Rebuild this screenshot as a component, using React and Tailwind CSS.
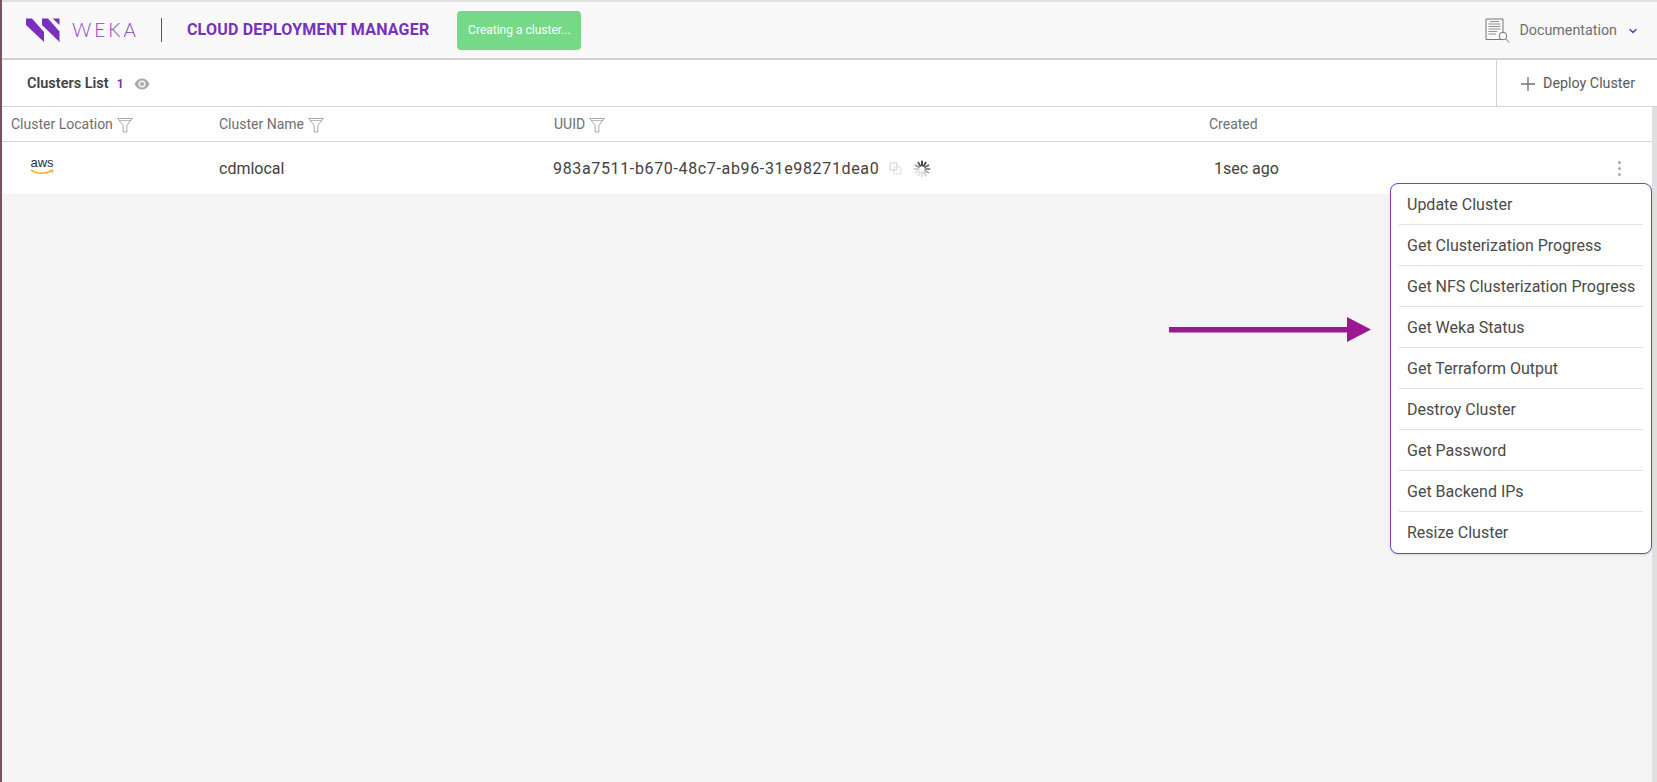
import React from 'react';
import { ChevronDown } from 'lucide-react';

const menuItems = [
  'Update Cluster',
  'Get Clusterization Progress',
  'Get NFS Clusterization Progress',
  'Get Weka Status',
  'Get Terraform Output',
  'Destroy Cluster',
  'Get Password',
  'Get Backend IPs',
  'Resize Cluster',
];

function WekaMark() {
  return (
    <svg width="34" height="24" viewBox="0 0 34 24" fill="#7b2fbe">
      <path d="M0 0.500H6L18 14V24L0 7Z" />
      <path d="M16 0.500H22L33.500 13.500V24L16 7Z" />
      <path d="M26.600 0.500H33.500V7Z" />
    </svg>
  );
}

function FunnelIcon() {
  return (
    <svg width="16" height="16" viewBox="0 0 16 16" fill="none" stroke="#a8a8a8" strokeWidth="1">
      <path d="M0.700 1.500H15.300L9.800 8.500V15H6.200V8.500Z" strokeLinejoin="round" />
      <path d="M2 3.500H14" strokeWidth="0.800" />
    </svg>
  );
}

function EyeIcon() {
  return (
    <svg width="16" height="12" viewBox="0 0 15 12">
      <path d="M0 6C2 2 4.500 0.500 7.500 0.500C10.500 0.500 13 2 15 6C13 10 10.500 11.500 7.500 11.500C4.500 11.500 2 10 0 6Z" fill="#a8a8a8" />
      <circle cx="7.500" cy="6" r="3.600" fill="#f4f4f4" />
      <circle cx="7.500" cy="6" r="2" fill="#a8a8a8" />
    </svg>
  );
}

function DocIcon() {
  return (
    <svg width="25" height="25" viewBox="0 0 25 25" fill="none" stroke="#777" strokeWidth="1">
      <path d="M1 1H18V21.500H1Z" fill="#f9f9f9" />
      <path d="M5 3.500H14M3.500 6H15.500M3.500 8.500H15.500M3.500 11H15.500M3.500 13.500H12M3.500 16H11" strokeWidth="0.800" />
      <circle cx="18" cy="18" r="3.800" fill="#f9f9f9" />
      <path d="M21 21L24 24.500" />
    </svg>
  );
}

function CopyIcon() {
  return (
    <svg width="13" height="13" viewBox="0 0 13 13" fill="none" stroke="#cfcfcf" strokeWidth="1">
      <path d="M1 1H8V8H1Z" />
      <path d="M5 5H12V12H5Z" strokeDasharray="1.500 1" />
    </svg>
  );
}

function Spinner() {
  const shades = ['#333', '#444', '#666', '#888', '#aaa', '#ccc', '#ddd', '#e4e4e4', '#e4e4e4', '#d0d0d0', '#999', '#555'];
  return (
    <svg width="18" height="18" viewBox="0 0 18 18" strokeWidth="1.800" strokeLinecap="round">
      {shades.map((c, i) => (
        <line key={i} x1="9" y1="1.500" x2="9" y2="5.500" stroke={c} transform={`rotate(${i * 30} 9 9)`} />
      ))}
    </svg>
  );
}

function AwsLogo() {
  return (
    <div className="flex w-[24px] flex-col items-center">
      <span className="text-[13px] leading-[12px] text-[#232f3e] font-['Liberation_Sans',sans-serif]">aws</span>
      <svg width="24" height="6" viewBox="0 0 24 6" fill="none" stroke="#f90" strokeWidth="1.300">
        <path d="M1 1C6 5 16 5 21 2" />
        <path d="M19.500 1.300L23 1.200L21.800 4" strokeWidth="1" />
      </svg>
    </div>
  );
}

function HeaderCell({ label, filter, className }) {
  return (
    <div className={`flex items-center gap-[4px] pt-[1px] text-[14px] text-[#6f6f6f] ${className}`}>
      <span>{label}</span>
      {filter && <FunnelIcon />}
    </div>
  );
}

export default function App() {
  return (
    <div className="relative flex h-[782px] w-full overflow-hidden bg-[#f5f5f5] font-['Roboto',sans-serif]">
      <div className="w-[2px] shrink-0 bg-[#7d4f60]" />
      <div className="flex min-w-0 flex-1 flex-col">
        <div className="h-[2px] bg-[#e0e0e0]" />

        <header className="flex h-[56px] items-center justify-between bg-[#f9f9f9] pl-[24px] pr-[18px]">
          <div className="flex items-center">
            <WekaMark />
            <span className="ml-[12px] text-[19px] font-light tracking-[3px] text-[#8a45c8] font-['Lato',sans-serif]">WEKA</span>
            <div className="ml-[22px] h-[24px] w-px bg-[#7b2fbe]" />
            <span className="ml-[25px] text-[16px] font-bold tracking-[0.2px] text-[#7b2fbe]">CLOUD DEPLOYMENT MANAGER</span>
            <div className="ml-[28px] flex h-[39px] w-[124px] items-center justify-center rounded-[4px] bg-[#76d987] text-[12px] text-white">
              Creating a cluster...
            </div>
          </div>
          <div className="flex items-center">
            <DocIcon />
            <span className="ml-[9px] pt-[2px] text-[14.300px] text-[#6f6f6f]">Documentation</span>
            <ChevronDown size={12} strokeWidth={3} className="ml-[10px] mt-[2px] text-[#7b2fbe]" />
          </div>
        </header>
        <div className="h-[2px] bg-[#d0d0d0]" />

        <div className="flex h-[47px] items-center justify-between border-b border-[#d4d4d4] bg-white">
          <div className="flex items-center pl-[25px] pt-[1px]">
            <span className="text-[14.500px] font-semibold text-[#424242]">Clusters List</span>
            <span className="ml-[8px] text-[12px] font-bold text-[#7b2fbe]">1</span>
            <span className="ml-[10px]"><EyeIcon /></span>
          </div>
          <div className="flex h-full w-[161px] items-center gap-[8px] border-l border-[#d4d4d4] pl-[24px] pt-[1px]">
            <svg width="14" height="14" viewBox="0 0 14 14" stroke="#6f6f6f" strokeWidth="1.300">
              <path d="M7 0V14M0 7H14" />
            </svg>
            <span className="text-[14.300px] text-[#5a5a5a]">Deploy Cluster</span>
          </div>
        </div>

        <div className="flex flex-1">
          <div className="min-w-0 flex-1">
            <div className="flex h-[35px] items-center border-b border-[#d4d4d4] bg-white">
              <HeaderCell label="Cluster Location" filter className="w-[216px] pl-[9px]" />
              <HeaderCell label="Cluster Name" filter className="w-[336px] pl-[1px]" />
              <HeaderCell label="UUID" filter className="w-[655px]" />
              <HeaderCell label="Created" />
            </div>
            <div className="flex h-[52px] items-center bg-white">
              <div className="w-[215px] pb-[4px] pl-[28px]">
                <AwsLogo />
              </div>
              <div className="w-[336px] pl-[2px] pt-[1px] text-[16px] text-[#424242]">cdmlocal</div>
              <div className="flex w-[661px] items-center pt-[1px] text-[16px] tracking-[0.650px] text-[#424242]">
                <span>983a7511-b670-48c7-ab96-31e98271dea0</span>
                <span className="ml-[10px]"><CopyIcon /></span>
                <span className="ml-[11px]"><Spinner /></span>
              </div>
              <div className="flex-1 pt-[1px] text-[16px] text-[#424242]">1sec ago</div>
              <div className="mr-[31px] flex flex-col gap-[3px]">
                <div className="h-[3px] w-[3px] rounded-full bg-[#a8a8a8]" />
                <div className="h-[3px] w-[3px] rounded-full bg-[#a8a8a8]" />
                <div className="h-[3px] w-[3px] rounded-full bg-[#a8a8a8]" />
              </div>
            </div>
          </div>
          <div className="w-[5px] shrink-0 bg-[#e0e0e0]" />
        </div>
      </div>

      {/* actions menu, sits over the table */}
      <div className="absolute left-[1390px] top-[183px] w-[262px] rounded-[8px] border border-[#7b3fc0] bg-white px-[8px] shadow-sm">
        {menuItems.map((item, i) => (
          <div
            key={item}
            className={`flex h-[41px] items-center pl-[8px] pt-[1px] text-[16px] text-[#4a4a4a] ${i < menuItems.length - 1 ? 'border-b border-[#e2e2e2]' : ''}`}
          >
            {item}
          </div>
        ))}
      </div>

      {/* annotation arrow */}
      <svg className="absolute left-[1169px] top-[317px]" width="202" height="25" viewBox="0 0 202 25" fill="#9c1892">
        <path d="M0 10H178V0L202 12.500L178 25V15.500H0Z" />
      </svg>
    </div>
  );
}
